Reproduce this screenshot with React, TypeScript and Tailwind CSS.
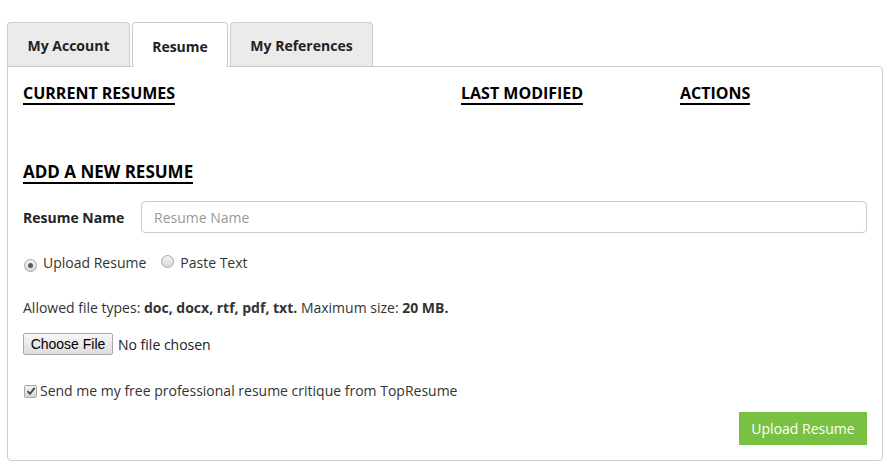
import { useState } from "react";

const tabs = [
  { label: "My Account", width: "w-[123px]" },
  { label: "Resume", width: "w-[96px]" },
  { label: "My References", width: "w-[143px]" },
];

function Radio({ checked }: { checked?: boolean }) {
  return (
    <span className="inline-flex h-[13px] w-[13px] items-center justify-center rounded-full border border-[#a6a6a6] bg-gradient-to-b from-[#f4f4f4] to-[#d8d8d8]">
      {checked && <span className="h-[5px] w-[5px] rounded-full bg-[#5a5a5a]" />}
    </span>
  );
}

function CheckBox() {
  return (
    <span className="inline-flex h-[13px] w-[13px] items-center justify-center rounded-[2px] border border-[#a6a6a6] bg-gradient-to-b from-[#f4f4f4] to-[#d6d6d6]">
      <svg width="10" height="10" viewBox="0 0 10 10">
        <path d="M1.5 5.2 L4 7.8 L8.6 1.8" fill="none" stroke="#4a4a4a" strokeWidth="1.9" />
      </svg>
    </span>
  );
}

export default function App() {
  const [active, setActive] = useState("Resume");
  const [name, setName] = useState("");
  const headerClasses =
    "inline-block border-b-2 border-black text-[16px] font-bold uppercase leading-5 text-black";

  return (
    <div className="min-h-[474px] bg-white pl-[7px] pt-[22px] font-['Open_Sans',sans-serif] text-[14px] text-[#333]">
      <div className="w-[876px]">
        <div className="flex gap-[2px]">
          {tabs.map((tab) => (
            <button
              key={tab.label}
              onClick={() => setActive(tab.label)}
              className={
                tab.label === active
                  ? `relative z-10 -mb-px h-[45px] ${tab.width} rounded-t-[4px] border border-b-0 border-[#ccc] bg-white pt-[2px] text-[14px] font-bold text-[#222]`
                  : `h-[44px] ${tab.width} rounded-t-[4px] border border-b-0 border-[#ccc] bg-[#ebebeb] pt-[2px] text-[14px] font-bold text-[#222]`
              }
            >
              {tab.label}
            </button>
          ))}
        </div>
        <div className="rounded-b-[4px] rounded-tr-[4px] border border-[#ccc] px-[15px] pb-[15px] pt-4">
          <div className="grid grid-cols-[438px_219px_1fr]">
            <div>
              <span className={headerClasses}>Current Resumes</span>
            </div>
            <div>
              <span className={headerClasses}>Last Modified</span>
            </div>
            <div>
              <span className={headerClasses}>Actions</span>
            </div>
          </div>

          <div className="mt-[57px]">
            <span className="inline-block border-b-2 border-black text-[17px] font-bold uppercase leading-5 text-black">
              Add a new resume
            </span>
          </div>

          <div className="mt-[17px] flex items-center">
            <label htmlFor="resume-name" className="w-[118px] text-[14px] font-bold text-[#222]">
              Resume Name
            </label>
            <input
              id="resume-name"
              type="text"
              value={name}
              placeholder="Resume Name"
              onChange={(e) => setName(e.target.value)}
              className="h-[32px] flex-1 rounded-[4px] border border-[#ccc] px-3 text-[14px] text-[#333] placeholder:text-[#999] focus:outline-none"
            />
          </div>

          <div className="mt-5 flex items-center leading-5">
            <span className="ml-px">
              <Radio checked />
            </span>
            <span className="ml-[6px] text-[#333]">Upload Resume</span>
            <span className="ml-[15px]">
              <Radio />
            </span>
            <span className="ml-[6px] text-[#333]">Paste Text</span>
          </div>

          <p className="mt-[25px] leading-5 text-[#333]">
            Allowed file types: <b>doc, docx, rtf, pdf, txt.</b> Maximum size: <b>20 MB.</b>
          </p>

          <div className="mt-[15px] flex items-center">
            <span className="flex h-[22px] w-[90px] items-center justify-center rounded-[2px] border border-[#a9a9a9] bg-gradient-to-b from-[#f6f6f6] to-[#dedede] font-['Liberation_Sans',Arial,sans-serif] text-[14px] text-black">
              Choose File
            </span>
            <span className="ml-[5px] text-[#222]">No file chosen</span>
          </div>

          <div className="mt-[26px] flex items-center leading-5">
            <span className="ml-px">
              <CheckBox />
            </span>
            <span className="ml-[3px] text-[#333]">Send me my free professional resume critique from TopResume</span>
          </div>

          <div className="mt-[11px] flex justify-end">
            <button className="h-[33px] w-[128px] bg-[#7ac143] text-[14px] text-white">Upload Resume</button>
          </div>
        </div>
      </div>
    </div>
  );
}
